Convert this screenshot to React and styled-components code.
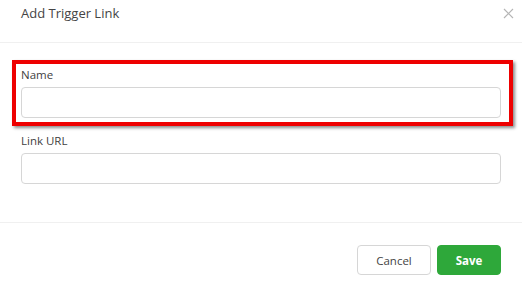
import React from "react";
import styled, { createGlobalStyle } from "styled-components";

const Global = createGlobalStyle`
  html, body { margin: 0; padding: 0; background: #fff; }
  body { font-family: "Open Sans", "Noto Sans", sans-serif; }
  * { box-sizing: border-box; }
`;

const Dialog = styled.div`
  width: 522px;
  height: 283px;
  background: #fff;
  display: flex;
  flex-direction: column;
  overflow: hidden;
`;

const Header = styled.div`
  height: 43px;
  padding: 4px 8px 0 21px;
  display: flex;
  align-items: flex-start;
  justify-content: space-between;
  border-bottom: 1px solid #f0f0f0;
`;

const Title = styled.h4`
  margin: 0;
  font-size: 13px;
  line-height: 18px;
  font-weight: 400;
  color: #444;
`;

const Close = styled.button`
  border: 0;
  background: none;
  padding: 0;
  margin-top: 4px;
  width: 11px;
  height: 11px;
  display: flex;
  cursor: pointer;
`;

const Body = styled.div`
  padding: 24px 21px 0;
  display: flex;
  flex-direction: column;
  gap: 15px;
  height: 180px;
  border-bottom: 1px solid #f0f0f0;
`;

const Field = styled.div`
  position: relative;
  display: flex;
  flex-direction: column;
  gap: 4px;
`;

const Highlight = styled.div`
  position: absolute;
  left: -9px;
  right: -12px;
  top: -7px;
  bottom: -8px;
  border: 4px solid #ee0000;
  box-shadow: 2px 2px 3px rgba(0, 0, 0, 0.45);
  pointer-events: none;
`;

const Label = styled.label`
  font-size: 11.5px;
  line-height: 16px;
  color: #3f3f3f;
`;

const Input = styled.input`
  height: 31px;
  width: 100%;
  border: 1px solid #d6d6d6;
  border-radius: 4px;
  padding: 0 8px;
  font: inherit;
  font-size: 12px;
  outline: none;
`;

const Footer = styled.div`
  flex: 1;
  display: flex;
  justify-content: flex-end;
  align-items: flex-start;
  gap: 6px;
  padding: 22px 21px 0;
`;

const Button = styled.button`
  height: 30px;
  width: ${(p) => (p.$primary ? "64px" : "74px")};
  padding: 0;
  border-radius: 4px;
  font-family: "Open Sans", "Noto Sans", sans-serif;
  font-size: 11.5px;
  font-weight: ${(p) => (p.$primary ? 700 : 400)};
  color: ${(p) => (p.$primary ? "#fff" : "#444")};
  background: ${(p) => (p.$primary ? "#2ea83a" : "#fff")};
  border: 1px solid ${(p) => (p.$primary ? "#2ea83a" : "#d6d6d6")};
  cursor: pointer;
`;

export default function App() {
  return (
    <>
      <Global />
      <Dialog>
        <Header>
          <Title>Add Trigger Link</Title>
          <Close aria-label="Close">
            <svg width="11" height="11" viewBox="0 0 11 11">
              <path d="M1 1L10 10M10 1L1 10" stroke="#b5b5b5" strokeWidth="1.2" />
            </svg>
          </Close>
        </Header>
        <Body>
          <Field>
            <Label>Name</Label>
            <Input />
            <Highlight />
          </Field>
          <Field>
            <Label>Link URL</Label>
            <Input />
          </Field>
        </Body>
        <Footer>
          <Button>Cancel</Button>
          <Button $primary>Save</Button>
        </Footer>
      </Dialog>
    </>
  );
}
